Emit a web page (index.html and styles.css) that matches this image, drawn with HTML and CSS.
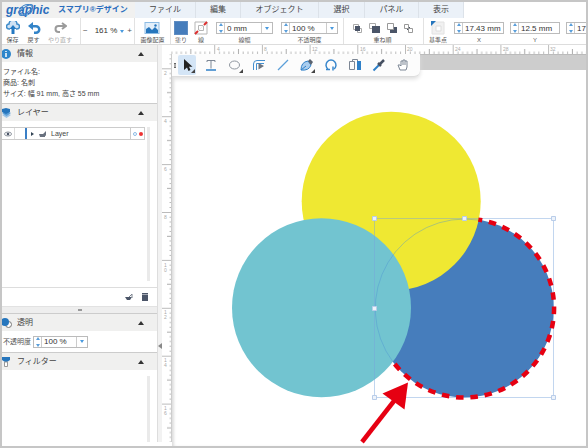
FILE: index.html
```html
<!DOCTYPE html>
<html lang="ja">
<head>
<meta charset="utf-8">
<title>スマプリ®デザイン</title>
<link rel="stylesheet" href="styles.css">
</head>
<body>
<div class="app">
  <header class="menubar">
    <div class="brand">
      <span class="logo">graphic
        <svg class="logo-ring" viewBox="0 0 20 16"><g fill="none" stroke="#3f83c9"><ellipse cx="10" cy="8" rx="7" ry="5" transform="rotate(-30 10 8)"/><ellipse cx="10" cy="8" rx="8" ry="3" transform="rotate(-35 10 8)"/></g></svg>
      </span>
      <span class="product">スマプリ®デザイン</span>
    </div>
    <nav class="menus">
      <button class="m1">ファイル</button><button class="m2">編集</button><button class="m3">オブジェクト</button><button class="m4">選択</button><button class="m5">パネル</button><button class="m6">表示</button>
    </nav>
  </header>

  <div class="toolbar">
    <div class="group g-history">
      <button class="tool"><svg width="14" height="14" viewBox="0 0 14 14"><path d="M4 8H3a2.500 2.500 0 0 1 0-5 4 4 0 0 1 8 0 2.500 2.500 0 0 1 0 5h-1" fill="#cfe2f4" stroke="#3f8cca" stroke-width="1.500"/><path d="M7 4l3.500 4H8.500v5h-3V8h-2z" fill="#2479c2"/></svg><span>保存</span></button>
      <button class="tool"><svg width="14" height="14" viewBox="0 0 14 14"><path d="M6 1L1 5l5 4V6.500h3a2 2 0 0 1 0 4H7V13h2a4.500 4.500 0 0 0 0-9H6z" fill="#3384c8"/></svg><span>戻す</span></button>
      <button class="tool redo"><svg width="14" height="14" viewBox="0 0 14 14"><path d="M9 2l4 3-4 3M12 5H5.500a3 3 0 0 0 0 6H7" fill="none" stroke="#9b9b9b" stroke-width="2"/></svg><span>やり直す</span></button>
    </div>
    <div class="group g-zoom"><button>−</button><output>161 %</output><button class="caret" aria-label="倍率"></button><button>+</button></div>
    <div class="group g-image">
      <button class="tool"><svg width="16" height="14" viewBox="0 0 16 14"><rect x="1" y="1.500" width="14" height="11" fill="#e3effa" stroke="#8dbbe3"/><path d="M2 12V8l3-2 3 3 3-3 3 3v3z" fill="#2676bd"/><circle cx="11.500" cy="4.500" r="1.200" fill="#2676bd"/></svg><span>画像配置</span></button>
    </div>
    <div class="group g-paint">
      <button class="tool"><i class="swatch"></i><span>塗り</span></button>
      <button class="tool"><svg width="14" height="14" viewBox="0 0 14 14"><path d="M1 1h12v12H1zM4.500 4.500h5v5h-5z" fill="#fff" stroke="#b5b5b5"/><path d="M1 13L13 1" stroke="#ececec"/><path d="M1 13l3-3M10 4l3-3" stroke="#dc2f2f" stroke-width="2"/></svg><span>線</span></button>
      <div class="field"><div class="box"><i class="spin"></i><input id="sw" value="0 mm"><button class="drop" aria-label="線幅"></button></div><label for="sw">線幅</label></div>
      <div class="field"><div class="box"><i class="spin"></i><input id="op" value="100 %"><button class="drop" aria-label="不透明度"></button></div><label for="op">不透明度</label></div>
    </div>
    <div class="group g-order">
      <div class="field"><div class="orders">
        <button aria-label="前面へ"><svg width="11" height="11" viewBox="0 0 11 11"><path d="M1.500 1.500h5v5h-5zM5.500 5.500h4v4h-4z" fill="#fff" stroke="#aaa"/><path d="M3 3h5v5H3z" fill="#4b5568"/></svg></button>
        <button aria-label="最前面へ"><svg width="11" height="11" viewBox="0 0 11 11"><path d="M.5.500h6v5h-6z" fill="#fff" stroke="#aaa"/><path d="M3 3h8v7H3z" fill="#4b5568"/></svg></button>
        <button aria-label="最背面へ"><svg width="11" height="11" viewBox="0 0 11 11"><path d="M4 4h7v6H4z" fill="#4b5568"/><path d="M1.500.500h6v6h-6z" fill="#fff" stroke="#999"/></svg></button>
        <button aria-label="背面へ"><svg width="11" height="11" viewBox="0 0 11 11"><path d="M4 4h3v3H4z" fill="#4b5568"/><path d="M1.500 1.500h4v4h-4zM5.500 5.500h4v4h-4z" fill="#fff" stroke="#999"/></svg></button>
      </div><span>重ね順</span></div>
    </div>
    <div class="group g-pos">
      <button class="tool"><svg width="14" height="14" viewBox="0 0 14 14"><path d="M1 1h12v12H1z" fill="#f1f1f1" stroke="#e2e2e2"/><path d="M5 5h5v5H5z" fill="#fff" stroke="#ddd"/><path d="M0 0h5L0 5z" fill="#2676bd"/></svg><span>基準点</span></button>
      <div class="field"><div class="box"><i class="spin"></i><input id="px" value="17.43 mm"></div><label for="px">X</label></div>
      <div class="field"><div class="box"><i class="spin"></i><input id="py" value="12.5 mm"></div><label for="py">Y</label></div>
      <div class="field"><div class="box"><i class="spin"></i><input aria-label="幅" value="17.8 mm"></div></div>
    </div>
  </div>

  <main class="work">
    <aside class="sidebar">
      <section>
        <h2><svg width="10" height="10" viewBox="0 0 10 10"><circle cx="4" cy="5" r="5" fill="#2e86cb"/><path d="M4 2v1M4 4v4" stroke="#fff" stroke-width="1.500"/></svg>情報<i class="up"></i></h2>
        <p class="info">ファイル名:<br>商品: 名刺<br>サイズ: 幅 91 mm, 高さ 55 mm</p>
      </section>
      <section>
        <h2><svg width="10" height="10" viewBox="0 0 10 10"><path d="M0 7l4.500-2L9 7 4.500 10z" fill="#9cc4e8"/><path d="M0 5l4.500-2L9 5 4.500 8z" fill="#5a9fd8"/><path d="M0 1l4-1 4 1v3L4 6 0 4z" fill="#2676bd"/></svg>レイヤー<i class="up"></i></h2>
        <div class="layers">
          <div class="layer">
            <span class="eye"><svg width="8" height="6" viewBox="0 0 8 6"><ellipse cx="4" cy="3" rx="3.500" ry="2" fill="none" stroke="#8a919b"/><circle cx="4" cy="3" r="1.300" fill="#4b5568"/></svg></span>
            <span class="name"><i class="right"></i><svg width="9" height="8" viewBox="0 0 9 8"><path d="M1 4h6v3H2zM5 4l3-3v5" fill="#69717f"/></svg>Layer</span>
            <span class="marks"><i class="ring"></i><i class="dot"></i></span>
          </div>
          <div class="track"></div>
        </div>
        <div class="actions">
          <button aria-label="新規レイヤー"><svg width="10" height="8" viewBox="0 0 10 8"><path d="M1 4h7L6 7H3z" fill="#4b5568"/><path d="M5 4l3-3v4" fill="none" stroke="#7b828e"/></svg></button>
          <button aria-label="削除"><svg width="8" height="8" viewBox="0 0 8 8"><path d="M1 2h6v6H1zM1 0h6v1.500H1z" fill="#4b5568"/></svg></button>
        </div>
        <div class="grip"></div>
      </section>
      <section>
        <h2><svg width="10" height="10" viewBox="0 0 10 10"><circle cx="6.500" cy="6.500" r="3" fill="#fff" stroke="#777"/><circle cx="3" cy="4" r="4" fill="#2676bd"/></svg>透明<i class="up"></i></h2>
        <div class="opacity"><label for="o2">不透明度</label><div class="box"><i class="spin"></i><input id="o2" value="100 %"><button class="drop" aria-label="不透明度"></button></div></div>
      </section>
      <section class="filters">
        <h2><svg width="10" height="10" viewBox="0 0 10 10"><path d="M0 0h8v3L5 5H3L0 3z" fill="#2676bd"/><path d="M2.500 5h3v4.500h-3z" fill="#fff" stroke="#999"/></svg>フィルター<i class="up"></i></h2>
        <div class="track"></div>
      </section>
    </aside>
    <div class="splitter"><i></i></div>
    <div class="stage">
      <svg class="hruler" aria-hidden="true">
        <defs><pattern id="ph" x="4.500" width="47.700" height="9" patternUnits="userSpaceOnUse"><path d="M.5 0v9" stroke="#bbb"/><path d="M24.300 4v5" stroke="#aaa"/><path d="M5.300 6.500v3M10 6.500v3M14.800 6.500v3M19.500 6.500v3M29 6.500v3M33.800 6.500v3M38.500 6.500v3M43.300 6.500v3" stroke="#bbb"/></pattern></defs>
        <rect x="9" width="100%" height="9" fill="url(#ph)"/>
        <g class="nums"><text x="55" y="6">4</text><text x="102" y="6">8</text><text x="150" y="6">12</text><text x="198" y="6">16</text><text x="245" y="6">20</text><text x="293" y="6">24</text><text x="341" y="6">28</text><text x="388" y="6">32</text></g>
      </svg>
      <svg class="vruler" aria-hidden="true">
        <defs><pattern id="pv" y="14.300" width="10" height="47.900" patternUnits="userSpaceOnUse"><path d="M0 .5h10" stroke="#bbb"/><path d="M5 24.300h5" stroke="#aaa"/><path d="M7.500 5.300h3M7.500 10h3M7.500 14.800h3M7.500 19.500h3M7.500 29h3M7.500 33.800h3M7.500 38.500h3M7.500 43.300h3" stroke="#bbb"/></pattern></defs>
        <rect width="10" height="100%" fill="url(#pv)"/>
        <g class="nums"><text x="2" y="21">2</text><text x="2" y="69">4</text><text x="2" y="117">6</text><text x="2" y="165">8</text><text x="2" y="213">1</text><text x="2" y="218">0</text><text x="2" y="260">1</text><text x="2" y="265">2</text><text x="2" y="308">1</text><text x="2" y="313">4</text><text x="2" y="356">1</text><text x="2" y="361">6</text></g>
      </svg>
      <div class="canvas">
        <svg class="art" viewBox="172 54 414 392" preserveAspectRatio="xMinYMin meet">
          <circle cx="464.300" cy="308" r="89.500" fill="#467dbc"/>
          <circle cx="391.200" cy="201.300" r="89.500" fill="#efe832"/>
          <circle cx="321.500" cy="307.700" r="89.500" fill="#72c4d0"/>
          <path d="M393 362A89.500 89.500 0 0 1 478 220" fill="none" stroke="#4c91d2" stroke-opacity=".4"/>
          <path d="M374.500 218.500h179v179h-179z" fill="none" stroke="#78a3dc" stroke-opacity=".45"/>
          <path d="M478.300 219.600A89.500 89.500 0 1 1 392.800 361.500" fill="none" stroke="#e60012" stroke-width="4.500" stroke-dasharray="7.500 6.800" stroke-dashoffset="3.500"/>
          <g fill="#edf3fb" stroke="#b9cde9"><path d="M372.500 216.500h4v4h-4zM462.500 216.500h4v4h-4zM551.500 216.500h4v4h-4zM372.500 306.500h4v4h-4zM372.500 395.500h4v4h-4zM551.500 395.500h4v4h-4z"/></g>
          <path d="M362 442L394 401" stroke="#e60012" stroke-width="4.500"/>
          <path d="M408 382.500L382.500 393.500 404.500 409.500z" fill="#e60012"/>
        </svg>
        <div class="band"></div>
        <div class="palette">
          <i class="handle"></i>
          <button class="on" aria-label="選択"><svg viewBox="0 0 18 18"><path d="M6 3v11l3-2.500 1.500 3.500 2-1-1.500-3.300h3.500z" fill="#222"/><path d="M17 13v4h-4z" fill="#444"/></svg></button>
          <button aria-label="文字"><svg viewBox="0 0 18 18"><path d="M5 6V4.500h8V6M9 4.500v8" fill="none" stroke="#7d8795"/><path d="M4 14h10" stroke="#2f80c8" stroke-width="1.500"/></svg></button>
          <button aria-label="楕円"><svg viewBox="0 0 18 18"><ellipse cx="8.500" cy="9" rx="5" ry="4" fill="none" stroke="#8f969f"/><path d="M17 13v4h-4z" fill="#444"/></svg></button>
          <button aria-label="角"><svg viewBox="0 0 18 18"><path d="M3.500 14V8q0-3.500 3.500-3.500h8M6.500 14V7.500H14" fill="none" stroke="#4590d0"/><path d="M8.500 7l5.500 3-5.500 3.500z" fill="#6d7580"/></svg></button>
          <button aria-label="直線"><svg viewBox="0 0 18 18"><path d="M4 14L14 4" stroke="#5b9fd9" stroke-width="1.300"/></svg></button>
          <button aria-label="ペン"><svg viewBox="0 0 18 18"><path d="M3 14q0-8 7-9l3 4q-2 6-10 5z" fill="#a9cdee" stroke="#2f80c8"/><path d="M3 14l5-4" stroke="#2f80c8"/><path d="M10 5l2-2 3 3-2 3z" fill="#5a6370"/><path d="M17 13v4h-4z" fill="#444"/></svg></button>
          <button aria-label="回転"><svg viewBox="0 0 18 18"><path d="M6 13a5 5 0 1 1 6 0" fill="none" stroke="#3987cc" stroke-width="1.500"/><path d="M4 13.500h4M11 14.500v-4" stroke="#3987cc" stroke-width="1.500"/></svg></button>
          <button aria-label="反転"><svg viewBox="0 0 18 18"><path d="M3.500 5.500h5v8h-5zM6.500 5V3.500h5V13" fill="none" stroke="#7d8795"/><path d="M11 5h4v9h-4z" fill="#2f80c8"/></svg></button>
          <button aria-label="スポイト"><svg viewBox="0 0 18 18"><path d="M3.500 14.500L9 9" stroke="#2f80c8" stroke-width="2"/><path d="M8 7l3 3M9.500 8.500L14 4" stroke="#465062" stroke-width="2.500"/></svg></button>
          <button aria-label="手のひら"><svg viewBox="0 0 18 18"><path d="M6 14L4 9h2l1 1V5h2V4h2v1h2v6l-1 3z" fill="#fff" stroke="#7d8795"/><path d="M9 5v4M11 5v4" stroke="#7d8795"/></svg></button>
        </div>
      </div>
    </div>
  </main>
</div>
</body>
</html>
```
FILE: styles.css
```css
* { box-sizing: border-box; }
body {
  margin: 0;
  font: 8px/12px "Liberation Sans", "Noto Sans CJK JP", sans-serif;
  color: #555;
}
button, input {
  font: inherit;
  color: inherit;
  border: 0;
  padding: 0;
  margin: 0;
  background: none;
}
svg { display: block; flex: none; }
.app {
  display: flex;
  flex-direction: column;
  height: 100vh;
  border: 2px solid #c6c6c6;
  overflow: hidden;
  background: #fff;
}

/* menu bar */
.menubar { display: flex; flex: none; height: 16px; background: #fff; }
.brand {
  display: flex;
  align-items: center;
  width: 133px;
  padding-left: 4px;
  background: #f1f1f0;
  color: #2a6dbd;
  white-space: nowrap;
}
.logo { position: relative; width: 52px; font: italic bold 12px/14px "Liberation Sans", sans-serif; }
.logo-ring { position: absolute; left: 10px; top: -1px; width: 20px; height: 16px; }
.product { font-weight: bold; }
.menus { display: flex; }
.menus button { background: #ebf1f8; border-right: 1px solid #dce2e9; color: #444; white-space: nowrap; }
.m1 { width: 61px; }
.m2 { width: 45px; }
.m3 { width: 78px; }
.m4 { width: 46px; }
.m5 { width: 54px; }
.m6 { width: 45px; }

/* toolbar */
.toolbar {
  display: flex;
  flex: none;
  height: 27px;
  border-bottom: 1px solid #ddd;
  font-size: 6px;
  line-height: 8px;
  overflow: hidden;
}
.group { display: flex; flex: none; padding-top: 3px; border-right: 1px solid #e2e2e2; }
.group:last-child { border-right: 0; }
.tool, .field { display: flex; flex-direction: column; align-items: center; gap: 1px; white-space: nowrap; }
.tool { justify-content: flex-start; height: 23px; }
.g-history { width: 79px; }
.g-history .tool { width: 21px; }
.g-history .redo { width: 32px; color: #aaa; }
.g-zoom { width: 54px; align-items: center; justify-content: center; gap: 3px; padding: 0; font-size: 8px; }
.g-zoom output { margin-left: 4px; color: #333; white-space: nowrap; }
.caret { border: 2px solid transparent; border-top: 3px solid #4a9ade; border-bottom: 0; }
.g-image { width: 36px; justify-content: center; }
.g-paint { width: 173px; padding-left: 3px; gap: 8px; }
.g-paint .tool { width: 14px; }
.g-paint .tool:first-child { margin-right: -2px; }
.swatch { width: 14px; height: 14px; background: #467dbc; border: 1px solid #5f8dc2; }
.orders { display: flex; gap: 6px; height: 14px; align-items: center; }
.g-order { width: 80px; padding-right: 2px; justify-content: center; }
.g-pos { padding-left: 4px; gap: 6px; }
.g-pos .tool { width: 20px; }
.box {
  display: flex;
  align-items: center;
  width: 57px;
  height: 12px;
  margin: 1px 0;
  border: 1px solid #bbb;
  font-size: 8px;
  background: #fff;
}
.g-pos .box { width: 50px; }
.box input { flex: 1; min-width: 0; height: 10px; padding-left: 2px; color: #333; }
.spin {
  position: relative;
  flex: none;
  width: 8px;
  height: 10px;
  border-right: 1px solid #ccc;
}
.spin::before, .spin::after { content: ""; position: absolute; left: 2px; border: 2px solid transparent; }
.spin::before { top: 0; border-top: 0; border-bottom: 3px solid #5a9fdb; }
.spin::after { bottom: 0; border-bottom: 0; border-top: 3px solid #5a9fdb; }
.drop { display: grid; place-items: center; width: 11px; height: 10px; border-left: 1px solid #ccc; }
.drop::before { content: ""; border: 2px solid transparent; border-top: 3px solid #4a9ade; border-bottom: 0; }

/* side panels */
.work { display: flex; flex: 1; min-height: 0; }
.sidebar { display: flex; flex-direction: column; flex: none; width: 155px; padding-bottom: 4px; }
h2 {
  display: flex;
  align-items: center;
  gap: 5px;
  height: 17px;
  margin: 0;
  padding-right: 13px;
  background: #f0f0ef;
  font-size: 8px;
  font-weight: normal;
  color: #444;
}
section + section { border-top: 1px solid #ccc; }
.up { margin-left: auto; border: 3px solid transparent; border-top: 0; border-bottom: 4px solid #333; }
.info { margin: 0; padding: 4px 0 5px 1px; height: 41px; font-size: 7px; line-height: 11px; color: #444; }
.layers { display: flex; justify-content: space-between; height: 167px; padding: 6px 7px 6px 0; border-bottom: 1px solid #ddd; }
.layer { display: flex; width: 143px; height: 13px; border: 1px solid #ccc; border-left: 0; font-size: 7px; color: #444; }
.layer span { display: flex; align-items: center; }
.eye { width: 13px; justify-content: center; border-right: 1px solid #ddd; }
.name { flex: 1; margin-left: 10px; padding-left: 4px; gap: 4px; border-left: 2px solid #3a7fc6; }
.right { border: 2px solid transparent; border-left: 3px solid #345; border-right: 0; }
.marks { width: 14px; justify-content: center; gap: 2px; border-left: 1px solid #ccc; }
.ring { width: 4px; height: 4px; border: 1px solid #8bbbe6; border-radius: 50%; }
.dot { width: 4px; height: 4px; background: #e33; border-radius: 50%; }
.track { width: 3px; background: #eaeaea; }
.actions { display: flex; justify-content: flex-end; align-items: center; gap: 7px; height: 18px; padding-right: 8px; }
.grip { display: grid; place-items: center; height: 7px; background: #eee; border-top: 1px solid #e2e2e2; }
.grip::before { content: ""; width: 4px; height: 2px; background: #999; }
.opacity { display: flex; align-items: center; gap: 2px; height: 21px; padding-left: 1px; font-size: 7px; white-space: nowrap; }
.opacity .box { width: 55px; }
.filters { display: flex; flex-direction: column; flex: 1; }
.filters .track { flex: 1; align-self: flex-end; margin: 6px 7px 0 0; }
.splitter { display: flex; align-items: center; flex: none; width: 5px; margin-bottom: 4px; padding-top: 204px; background: #f2f2f2; border-left: 1px solid #ddd; }
.splitter i { border: 3px solid transparent; border-right: 4px solid #888; border-left: 0; }

/* rulers and drawing area */
.stage { display: grid; grid-template: 9px 1fr / 10px 1fr; flex: 1; min-width: 0; }
.hruler { grid-column: 1 / 3; width: 100%; height: 9px; }
.vruler { width: 10px; height: calc(100% - 4px); border-right: 1px solid #ccc; }
.nums { font-size: 5px; fill: #aaa; }
.canvas { position: relative; min-width: 0; min-height: 0; overflow: hidden; box-shadow: inset 3px 0 3px -1px #ddd; }
.art { position: absolute; inset: 0; width: 100%; height: 100%; }
.band { height: 16px; background: #cdcdcd; border-top: 1px solid #bbb; }
.palette {
  position: absolute;
  left: 0;
  top: 0;
  display: flex;
  align-items: center;
  gap: 6px;
  width: 248px;
  height: 23px;
  padding: 0 8px 0 2px;
  background: #fcfcfc;
  border-bottom: 1px solid #ddd;
  box-shadow: 0 2px 4px #ddd;
  border-bottom-right-radius: 6px;
}
.handle { width: 4px; height: 5px; margin-right: -4px; border: 1px solid #666; border-width: 1px 0; background: #aaa; }
.palette button { display: grid; place-items: center; flex: none; width: 18px; height: 20px; border-radius: 2px; }
.palette svg { width: 18px; height: 18px; }
.palette .on { background: #d4e5f6; }
```
